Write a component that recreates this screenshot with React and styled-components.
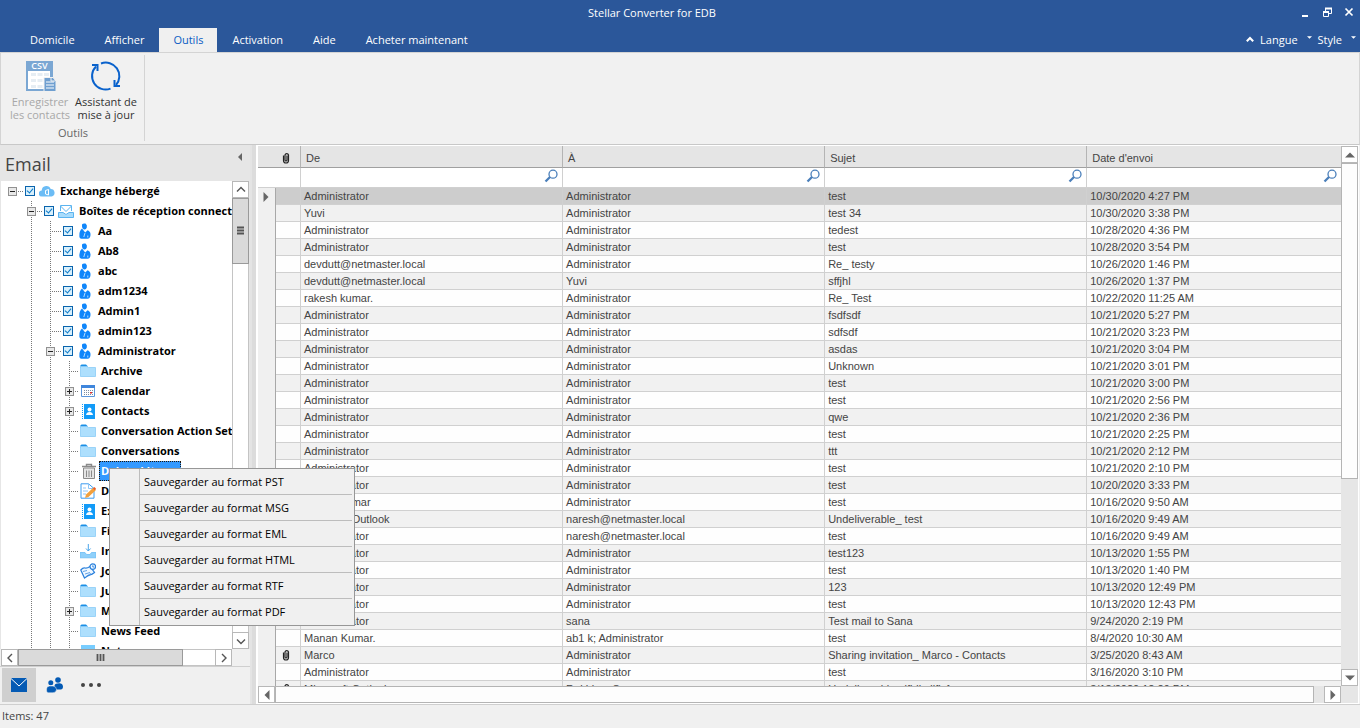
import React from "react";
import styled, { createGlobalStyle, css } from "styled-components";

const ui = '"Open Sans", "Noto Sans", sans-serif';
const gridFont = '"Liberation Sans", Arial, sans-serif';

const GlobalStyle = createGlobalStyle`
  *, *::before, *::after { box-sizing: border-box; }
  body { margin: 0; font-family: ${ui}; font-size: 11px; color: #444; background: #f0f0f0; }
  button { font: inherit; color: inherit; background: none; border: 0; padding: 0; margin: 0; }
  ul { list-style: none; margin: 0; padding: 0; }
  svg { display: block; flex: none; }
`;

const Window = styled.div`
  position: relative;
  display: flex;
  flex-direction: column;
  height: 100vh;
  overflow: hidden;
`;

/* ---------- Title bar and tabs ---------- */

const Header = styled.header`
  background: #2b579a;
  color: #fff;
  flex: none;
`;

const TitleBar = styled.div`
  display: grid;
  grid-template-columns: 1fr auto 1fr;
  align-items: center;
  height: 28px;
`;

const Title = styled.h1`
  grid-column: 2;
  margin: 0;
  padding: 0 56px 2px 0;
  font-size: 11px;
  font-weight: 400;
  line-height: 24px;
`;

const WindowButtons = styled.div`
  display: flex;
  justify-content: flex-end;
  gap: 12px;
  padding: 0 6px 4px 0;
`;

const TabBar = styled.nav`
  display: flex;
  align-items: stretch;
  height: 24px;
  padding-left: 15px;
`;

const Tab = styled.button`
  padding: 0 15px;
  line-height: 24px;
  ${(p) =>
    p.$active &&
    css`
      padding: 0 14px;
      background: #f0f0f0;
      color: #0a5cc4;
    `}
`;

const TabOptions = styled.div`
  display: flex;
  align-items: center;
  gap: 6px;
  margin-left: auto;
  padding-right: 4px;
`;

const OptionButton = styled.button`
  display: flex;
  align-items: center;
  gap: 9px;
  line-height: 24px;
  svg { margin-bottom: 6px; }
`;

/* ---------- Ribbon ---------- */

const Ribbon = styled.section`
  flex: none;
  display: flex;
  height: 93px;
  border: 1px solid #d4d4d4;
  border-bottom-color: #c8c8c8;
  background: #f1f1f1;
`;

const RibbonGroup = styled.div`
  display: flex;
  flex-direction: column;
  align-items: center;
  margin: 2px 0 3px;
  padding: 5px 5px 0 6px;
  border-right: 1px solid #d4d4d4;
`;

const RibbonTools = styled.div`
  display: flex;
  align-items: flex-start;
`;

const ToolButton = styled.button`
  display: flex;
  flex-direction: column;
  align-items: center;
  width: 66px;
  line-height: 13px;
  color: ${(p) => (p.disabled ? "#a8a8a8" : "#333")};
  span { white-space: nowrap; }
  svg { margin-bottom: 3px; }
`;

const GroupLabel = styled.div`
  margin-top: 5px;
  line-height: 14px;
  color: #666;
`;

/* ---------- Workspace ---------- */

const Workspace = styled.main`
  flex: 1;
  min-height: 0;
  display: flex;
`;

const Sidebar = styled.aside`
  flex: none;
  width: 250px;
  display: flex;
  flex-direction: column;
  min-height: 0;
`;

const Splitter = styled.div`
  flex: none;
  width: 6px;
  background: #dcdcdc;
  border-left: 2px solid #e4e4e4;
`;

const SidebarHeader = styled.div`
  flex: none;
  display: flex;
  align-items: flex-start;
  justify-content: space-between;
  height: 36px;
  padding: 8px 6px 0 5px;
  background: #e6e6e6;
`;

const SidebarTitle = styled.h2`
  margin: 0;
  font-size: 18px;
  font-weight: 400;
  line-height: 22px;
  color: #444;
`;

const TreeArea = styled.div`
  flex: 1;
  min-height: 0;
  display: flex;
  border: solid #e6e6e6;
  border-width: 0 1px;
  background: #fff;
`;

const Tree = styled.ul`
  flex: 1;
  min-width: 0;
  overflow: hidden;
  padding-left: 2px;
`;

const TreeRow = styled.li`
  display: flex;
  align-items: center;
  height: 20px;
  white-space: nowrap;
`;

const Guide = styled.span`
  flex: none;
  width: 19px;
  height: 20px;
  position: relative;
  display: flex;
  align-items: center;
  justify-content: center;
  &::before {
    content: "";
    position: absolute;
    left: 9px;
    top: 0;
    bottom: 0;
    width: 1px;
    background: repeating-linear-gradient(to bottom, #777 0 1px, transparent 1px 2px);
    display: ${(p) => (p.$vertical ? "block" : "none")};
  }
  &::after {
    content: "";
    position: absolute;
    left: 11px;
    right: ${(p) => (p.$stub ? "0" : "-2px")};
    top: 10px;
    height: 1px;
    background: repeating-linear-gradient(to right, #777 0 1px, transparent 1px 2px);
    display: ${(p) => (p.$branch ? "block" : "none")};
  }
`;

const Expander = styled.button`
  position: relative;
  z-index: 1;
  width: 9px;
  height: 9px;
  border: 1px solid #919191;
  background: #e8e8e8;
  &::before {
    content: "";
    position: absolute;
    left: 1px;
    top: 3px;
    width: 5px;
    height: 1px;
    background: #222;
  }
  &::after {
    content: "";
    position: absolute;
    left: 3px;
    top: 1px;
    width: 1px;
    height: 5px;
    background: #222;
    display: ${(p) => (p.$open ? "none" : "block")};
  }
`;

const TreeLabel = styled.label`
  display: flex;
  align-items: center;
  gap: 5px;
  height: 20px;
  padding-left: ${(p) => (p.$checkable ? "3px" : "1px")};
  font-weight: 700;
  color: #000;
`;

const Check = styled.input`
  appearance: none;
  flex: none;
  width: 10px;
  height: 10px;
  margin: 0 -1px 0 0;
  border: 1px solid #0a64ad;
  background: #d9f0fc;
  position: relative;
  &:checked::after {
    content: "";
    position: absolute;
    left: 2px;
    top: 0;
    width: 4px;
    height: 6px;
    border: solid #0a78c8;
    border-width: 0 1px 1px 0;
    transform: rotate(40deg);
  }
`;

const NodeText = styled.span`
  line-height: 18px;
  ${(p) =>
    p.$selected &&
    css`
      margin: 0 -2px;
      padding: 0 2px 0 1px;
      color: #fff;
      background: #3399ff;
      border: 1px dotted #20160a;
    `}
`;

/* ---------- Scroll bars ---------- */

const VScroll = styled.div`
  flex: none;
  width: 17px;
  display: flex;
  flex-direction: column;
  background: ${(p) => p.$track || "#fff"};
`;

const HScroll = styled.div`
  flex: none;
  height: 17px;
  display: flex;
  margin: 0 ${(p) => (p.$inset ? "18px" : "17px")} 0 ${(p) => (p.$inset ? "1px" : "0")};
  background: ${(p) => p.$track || "#fff"};
`;

const ScrollButton = styled.button`
  flex: none;
  width: 17px;
  height: 17px;
  display: grid;
  place-items: center;
  background: #fff;
  border: 1px solid #b8b8b8;
`;

const Thumb = styled.div`
  flex: ${(p) => p.$size} 1 0;
  display: grid;
  place-items: center;
  background: ${(p) => p.$fill || "#dadada"};
  border: 1px solid ${(p) => (p.$fill ? "#b4b4b4" : "#9a9a9a")};
`;

const Track = styled.div`
  flex: ${(p) => p.$size} 1 0;
  border: ${(p) => (p.$lined ? "solid #c4c4c4" : "0 solid")};
  border-width: ${(p) => (p.$lined === "x" ? "1px 0" : p.$lined ? "0 1px" : "0")};
`;

/* ---------- Sidebar footer ---------- */

const ModeBar = styled.nav`
  flex: none;
  display: flex;
  gap: 2px;
  height: 38px;
  padding: 1px 2px 2px;
  border-top: 1px solid #cfcfcf;
`;

const ModeButton = styled.button`
  width: 34px;
  height: 34px;
  display: grid;
  place-items: center;
  background: ${(p) => (p.$active ? "#cfcfcf" : "transparent")};
`;

/* ---------- Message grid ---------- */

const GridPane = styled.section`
  flex: 1;
  min-width: 0;
  display: flex;
  flex-direction: column;
  margin-right: 1px;
  border: 1px solid #fff;
  border-left-width: 2px;
  background: #e6e6e6;
  font-family: ${gridFont};
`;

const GridBody = styled.div`
  flex: 1;
  min-height: 0;
  display: flex;
`;

const GridClip = styled.div`
  flex: 1;
  min-width: 0;
  overflow: hidden;
  background: #f0f0f0;
`;

const Table = styled.table`
  width: 100%;
  table-layout: fixed;
  border-collapse: separate;
  border-spacing: 0;
`;

const Col = styled.col`
  width: ${(p) => p.$w};
`;

const HeadCell = styled.th`
  height: 22px;
  padding: 3px 5px 0;
  border-bottom: 1px solid #a0a0a0;
  border-right: ${(p) => (p.$divider ? "1px solid #b4b4b4" : "0")};
  background: #e5e5e5;
  text-align: left;
  font-weight: 400;
  line-height: 18px;
`;

const FilterCell = styled.td`
  height: 20px;
  padding: 0;
  background: #fff;
  border-bottom: 1px solid #d0d0d0;
  border-right: ${(p) => (p.$divider ? "1px solid #d0d0d0" : "0")};
`;

const FilterBox = styled.div`
  display: flex;
  align-items: center;
  padding: 0 4px 3px 0;
`;

const FilterInput = styled.input`
  flex: 1;
  min-width: 0;
  height: 16px;
  padding: 0 3px;
  border: 0;
  outline: 0;
  background: transparent;
  font: inherit;
`;

const Row = styled.tr`
  background: ${(p) => (p.$selected ? "#cdcdcd" : p.$odd ? "#f1f1f1" : "#fefefe")};
`;

const Cell = styled.td`
  height: 17px;
  padding: 0 3px;
  border-bottom: 1px solid #d0d0d0;
  border-right: ${(p) => (p.$last ? "0" : "1px solid #d0d0d0")};
  line-height: 16px;
  white-space: nowrap;
  overflow: hidden;
`;

const ClipCell = styled(Cell)`
  padding-left: 5px;
`;

const IndicatorCell = styled.td`
  height: 17px;
  padding: 0 0 0 3px;
  background: #f0f0f0;
  border-right: 1px solid #a8a8a8;
`;

/* ---------- Context menu ---------- */

const Menu = styled.ul`
  position: absolute;
  left: 109px;
  top: 468px;
  width: 246px;
  border: 1px solid #979797;
  background: #f0f0f0;
  color: #000;
`;

const MenuItem = styled.li`
  display: flex;
  height: 26px;
  padding-right: 2px;
  &::before {
    content: "";
    width: 29px;
    border-right: 1px solid #bdbdbd;
    margin-left: 1px;
  }
  button {
    flex: 1;
    text-align: left;
    padding-left: 4px;
    border-bottom: 1px solid ${(p) => (p.$last ? "transparent" : "#bdbdbd")};
  }
`;

const StatusBar = styled.footer`
  flex: none;
  height: 24px;
  padding-left: 2px;
  border-top: 1px solid #cfcfcf;
  line-height: 22px;
`;

/* ---------- Icons ---------- */

const CsvIcon = () => (
  <svg width="32" height="32" viewBox="0 0 32 32">
    <path d="M2 1H29V31H2Z" fill="#7ba7d3" />
    <path d="M4 11H26V29H4Z" fill="#fff" />
    <path d="M7 13h5v3H7zM13.500 13h5v3h-5zM20 13h5v3h-5zM7 19h5v3H7zM13.500 19h5v3h-5zM7 25h5v3H7zM13.500 25h5v3h-5z" fill="#e6edf3" />
    <path d="M20 17.500H29L32 21V31.500H20Z" fill="#6f9fd0" stroke="#f1f1f1" strokeWidth="1" />
    <path d="M22 22h8M22 25h8M22 28h8" stroke="#fff" strokeWidth="1" />
    <path d="M27 17v4h4" fill="none" stroke="#f1f1f1" strokeWidth="1" />
    <text x="15.500" y="9" textAnchor="middle" fontSize="9" fontFamily="Open Sans, sans-serif" fontWeight="600" fill="#fff">CSV</text>
  </svg>
);

const RefreshIcon = () => (
  <svg width="32" height="32" viewBox="0 0 32 32" fill="none" stroke="#0a62cc" strokeWidth="2">
    <path d="M11 3.500A13.500 13.500 0 0 1 26 25" />
    <path d="M20.500 28.600A13.500 13.500 0 0 1 6 6.500" />
    <path d="M2 5H7.500v6" />
    <path d="M30 26h-5.500v-6" />
  </svg>
);

const TriangleIcon = ({ dir, size = 10, color = "#666" }) => {
  const shapes = {
    up: "M0 6L4 2L8 6Z",
    down: "M0 2L8 2L4 6Z",
    left: "M6 0V8L2 4Z",
    right: "M2 0V8L6 4Z",
  };
  return (
    <svg width={size} height={size} viewBox="0 0 8 8">
      <path d={shapes[dir]} fill={color} />
    </svg>
  );
};

const ChevronIcon = ({ dir, size = 10, color = "#555", width = 1.4 }) => {
  const shapes = {
    up: "M1 6.500L5 2.500L9 6.500",
    down: "M1 3.500L5 7.500L9 3.500",
    left: "M7 1L3 5L7 9",
    right: "M3 1L7 5L3 9",
  };
  return (
    <svg width={size} height={size} viewBox="0 0 10 10" fill="none" stroke={color} strokeWidth={width}>
      <path d={shapes[dir]} />
    </svg>
  );
};

const GripIcon = ({ vertical }) => (
  <svg width="9" height="9" viewBox="0 0 9 9" stroke="#555" strokeWidth="2">
    <path d={vertical ? "M1 1.500H8M1 4.500H8M1 7.500H8" : "M1.500 1V8M4.500 1V8M7.500 1V8"} strokeWidth="1.800" />
  </svg>
);

const MinimizeIcon = () => (
  <svg width="10" height="10" viewBox="0 0 10 10"><path d="M2 8h6v2H2z" fill="#fff" /></svg>
);

const RestoreIcon = () => (
  <svg width="10" height="10" viewBox="0 0 10 10" fill="none" stroke="#fff">
    <path d="M3.500 4V1.500H9.500V6.500H7" />
    <path d="M3 1.500h7M1 5h6" strokeWidth="2" />
    <path d="M1.500 4.500h5v5h-5z" />
  </svg>
);

const CloseIcon = () => (
  <svg width="10" height="10" viewBox="0 0 10 10" stroke="#fff" strokeWidth="1.700">
    <path d="M1.500 1.500L8.500 8.500M8.500 1.500L1.500 8.500" />
  </svg>
);

const CloudIcon = () => (
  <svg width="16" height="16" viewBox="0 0 16 16">
    <path d="M3 13.500a3 3 0 0 1-.3-6A4.800 4.800 0 0 1 7 3 4.600 4.600 0 0 1 11.700 6 3.800 3.800 0 0 1 12.600 13.500Z" fill="#6bbcf5" />
    <path d="M6.500 7.500l3-1v5.500L6.500 11z" fill="none" stroke="#fff" strokeWidth="1" />
  </svg>
);

const MailboxIcon = () => (
  <svg width="16" height="16" viewBox="0 0 16 16">
    <path d="M.5 9.500V14.500H15.500V9.500H11L8 12 5 9.500Z" fill="#a8dcfc" />
    <path d="M2.500 8V2.500H13.500V8M2.500 3L8 8.500L13.500 3M.5 9.500V14.500H15.500V9.500H11L8 11.500 5 9.500Z" fill="none" stroke="#5bb4f0" />
  </svg>
);

const PersonIcon = () => (
  <svg width="16" height="16" viewBox="0 0 16 16" fill="#0f86fb">
    <path d="M5 1.500Q6 0 8.500.500Q10.500 2 9.800 4.500Q9 7 7 6.500Q4.600 5.500 5 1.500Z" />
    <path d="M5 5.500L8.200 9.600 10.600 7.300Q13.600 8.500 13.500 11.500Q13.600 15 11 15.800H4.500Q2 15.500 2.400 12Q2.200 8 5 5.500Z" />
    <path d="M8 10L6.800 14M10.800 12.500v2" stroke="#e4f2ff" strokeWidth=".8" fill="none" />
  </svg>
);

const FolderIcon = () => (
  <svg width="16" height="16" viewBox="0 0 16 16">
    <path d="M.5 4V2.500L1.500 1.500H6L7.500 3V5H.5Z" fill="#1b8fe6" />
    <path d="M.5 3.500H7L8.500 4.500H15.500V13.500H.5Z" fill="#addffd" stroke="#8accf6" strokeWidth=".8" />
  </svg>
);

const CalendarIcon = () => (
  <svg width="16" height="16" viewBox="0 0 16 16">
    <path d="M1.500 2.500H14.500V13.500H1.500Z" fill="#fff" stroke="#5a96dc" />
    <path d="M1 2h14v3H1z" fill="#3f86dc" />
    <path d="M4 7.500h9M4 9.500h9M4 11.500h9" stroke="#7d8ea3" strokeDasharray="1 1" />
    <path d="M10 9h2v1.500h-2z" fill="#e03030" />
  </svg>
);

const ContactsIcon = () => (
  <svg width="16" height="16" viewBox="0 0 16 16">
    <path d="M4 1H15V16H4Z" fill="#129bf8" />
    <path d="M2.500 1V16" stroke="#129bf8" strokeDasharray="1 1" />
    <circle cx="9.500" cy="6.500" r="2" fill="#fff" />
    <path d="M6 12Q6.500 9 9.500 9T13 12Z" fill="#fff" />
  </svg>
);

const TrashIcon = () => (
  <svg width="16" height="16" viewBox="0 0 16 16" fill="none" stroke="#8a8a8a">
    <path d="M2 3.500H16M6.500 3V1.500H11.500V3" strokeWidth="1.400" />
    <path d="M3.500 5V15.500H14.500V5Z" fill="#e4e4e4" />
    <path d="M6.500 7.500V14M9 7.500V14M11.500 7.500V14" />
  </svg>
);

const DraftIcon = () => (
  <svg width="16" height="16" viewBox="0 0 16 16">
    <path d="M1 .8H8.500L14 5.500V15.200H1Z" fill="#fff" stroke="#3c9cf0" />
    <path d="M8.500 1V5.500H14M3 5h3M3 8h5M3 11h3" fill="none" stroke="#8cc4f6" />
    <path d="M13.500 4.500L16 7 8.500 14 5 15 6 11.500Z" fill="#f2a03c" />
    <path d="M14.500 4l1.500 1.800-1.200 1.400-1.800-1.800z" fill="#ef5a28" />
  </svg>
);

const InboxIcon = () => (
  <svg width="16" height="16" viewBox="0 0 16 16">
    <path d="M0 9.500H5L6.500 11.500H10L11.500 9.500H16V14.800H0Z" fill="#8fd0fa" stroke="#6bbcf5" strokeWidth=".8" />
    <path d="M8.300 1V8M6 5.500L8.300 8 10.600 5.500" fill="none" stroke="#4aa5ea" />
  </svg>
);

const JournalIcon = () => (
  <svg width="16" height="16" viewBox="0 0 16 16" fill="#eef7ff" stroke="#2a80dc" strokeWidth="1.200">
    <path d="M.8 7Q3 4.500 5 5T10 3.500L14.500 9.500Q12 11.500 10 12T4.500 15Z" />
    <path d="M3 8.500l4-1M5 11l5-1.500M6.500 13L11 10.500" strokeWidth=".7" />
    <circle cx="12.800" cy="3.600" r="2.800" />
    <path d="M12.800 2.300V4h1.500" strokeWidth=".9" />
  </svg>
);

const NotesIcon = () => (
  <svg width="16" height="16" viewBox="0 0 16 16"><path d="M1 2H15V15H1Z" fill="#78cdff" /></svg>
);

const PaperclipIcon = () => (
  <svg width="10" height="12" viewBox="0 0 10 12" fill="none" stroke="#222" strokeWidth="1.200">
    <path d="M2.500 3.500V8.500a2.400 2.400 0 0 0 5 0V3a1.800 1.800 0 0 0-3.500 0V8a1 1 0 0 0 2 0V3.500" />
  </svg>
);

const SearchIcon = () => (
  <svg width="14" height="14" viewBox="0 0 14 14" fill="none" stroke="#4a7fba">
    <circle cx="9" cy="5.200" r="4" strokeWidth="1.300" />
    <path d="M6 8L1.500 12.500" strokeWidth="2.300" />
  </svg>
);

const EnvelopeIcon = () => (
  <svg width="16" height="14" viewBox="0 0 16 14">
    <path d="M0 0H16V14H0Z" fill="#045ab4" />
    <path d="M0 .5L8 8 16 .5" fill="none" stroke="#fff" strokeWidth="1" />
  </svg>
);

const PeopleIcon = () => (
  <svg width="18" height="16" viewBox="0 0 18 16" fill="#045ab4">
    <circle cx="12" cy="3" r="2.800" />
    <circle cx="4.800" cy="5.800" r="2.500" />
    <path d="M8.500 10.500Q8 6.500 11.500 6.500Q16.500 5.500 17 9.500Q17 13 14 12.500H10.500Z" />
    <path d="M.6 14Q0 9.500 3.500 9H7Q10.500 9.500 10.500 12.500Q10.500 15.500 7 15.800H2Q.8 15.500.6 14Z" stroke="#f0f0f0" strokeWidth=".5" />
  </svg>
);

const MoreIcon = () => (
  <svg width="22" height="6" viewBox="0 0 22 6" fill="#444">
    <circle cx="3" cy="3" r="2" /><circle cx="11" cy="3" r="2" /><circle cx="19" cy="3" r="2" />
  </svg>
);

/* ---------- Data ---------- */

const tabs = ["Domicile", "Afficher", "Outils", "Activation", "Aide", "Acheter maintenant"];

const nodes = [
  { level: 0, text: "Exchange hébergé", Icon: CloudIcon, open: true },
  { level: 1, text: "Boîtes de réception connectées", Icon: MailboxIcon, open: true },
  { level: 2, text: "Aa", Icon: PersonIcon },
  { level: 2, text: "Ab8", Icon: PersonIcon },
  { level: 2, text: "abc", Icon: PersonIcon },
  { level: 2, text: "adm1234", Icon: PersonIcon },
  { level: 2, text: "Admin1", Icon: PersonIcon },
  { level: 2, text: "admin123", Icon: PersonIcon },
  { level: 2, text: "Administrator", Icon: PersonIcon, open: true },
  { level: 3, text: "Archive", Icon: FolderIcon },
  { level: 3, text: "Calendar", Icon: CalendarIcon, open: false },
  { level: 3, text: "Contacts", Icon: ContactsIcon, open: false },
  { level: 3, text: "Conversation Action Settings", Icon: FolderIcon },
  { level: 3, text: "Conversations", Icon: FolderIcon },
  { level: 3, text: "Deleted Items", Icon: TrashIcon, selected: true },
  { level: 3, text: "Drafts", Icon: DraftIcon },
  { level: 3, text: "ExternalContacts", Icon: ContactsIcon },
  { level: 3, text: "Files", Icon: FolderIcon },
  { level: 3, text: "Inbox", Icon: InboxIcon },
  { level: 3, text: "Journal", Icon: JournalIcon },
  { level: 3, text: "Junk Email", Icon: FolderIcon },
  { level: 3, text: "Migration", Icon: FolderIcon, open: false },
  { level: 3, text: "News Feed", Icon: FolderIcon },
  { level: 3, text: "Notes", Icon: NotesIcon },
];

const A = "Administrator";
const messages = [
  [A, A, "test", "10/30/2020 4:27 PM"],
  ["Yuvi", A, "test 34", "10/30/2020 3:38 PM"],
  [A, A, "tedest", "10/28/2020 4:36 PM"],
  [A, A, "test", "10/28/2020 3:54 PM"],
  ["devdutt@netmaster.local", A, "Re_ testy", "10/26/2020 1:46 PM"],
  ["devdutt@netmaster.local", "Yuvi", "sffjhl", "10/26/2020 1:37 PM"],
  ["rakesh kumar.", A, "Re_ Test", "10/22/2020 11:25 AM"],
  [A, A, "fsdfsdf", "10/21/2020 5:27 PM"],
  [A, A, "sdfsdf", "10/21/2020 3:23 PM"],
  [A, A, "asdas", "10/21/2020 3:04 PM"],
  [A, A, "Unknown", "10/21/2020 3:01 PM"],
  [A, A, "test", "10/21/2020 3:00 PM"],
  [A, A, "test", "10/21/2020 2:56 PM"],
  [A, A, "qwe", "10/21/2020 2:36 PM"],
  [A, A, "test", "10/21/2020 2:25 PM"],
  [A, A, "ttt", "10/21/2020 2:12 PM"],
  [A, A, "test", "10/21/2020 2:10 PM"],
  [A, A, "test", "10/20/2020 3:33 PM"],
  ["rakesh kumar", A, "test", "10/16/2020 9:50 AM"],
  ["Microsoft Outlook", "naresh@netmaster.local", "Undeliverable_ test", "10/16/2020 9:49 AM"],
  [A, "naresh@netmaster.local", "test", "10/16/2020 9:49 AM"],
  [A, A, "test123", "10/13/2020 1:55 PM"],
  [A, A, "test", "10/13/2020 1:40 PM"],
  [A, A, "123", "10/13/2020 12:49 PM"],
  [A, A, "test", "10/13/2020 12:43 PM"],
  [A, "sana", "Test mail to Sana", "9/24/2020 2:19 PM"],
  ["Manan Kumar.", "ab1 k; Administrator", "test", "8/4/2020 10:30 AM"],
  ["Marco", A, "Sharing invitation_ Marco - Contacts", "3/25/2020 8:43 AM", true],
  [A, A, "test", "3/16/2020 3:10 PM"],
  ["Microsoft Outlook", "Rakhi m; Sana", "Undeliverable_ ifjdjsdlflsf", "3/13/2020 12:29 PM", true],
];

const columns = ["De", "À", "Sujet", "Date d'envoi"];
const formats = ["PST", "MSG", "EML", "HTML", "RTF", "PDF"];

/* ---------- Parts ---------- */

function TreeNode({ level, text, Icon, open, selected }) {
  const checkable = level < 3;
  return (
    <TreeRow>
      {Array.from({ length: level }, (_, i) => (
        <Guide key={i} $vertical={i > 0} />
      ))}
      <Guide $vertical={level > 0} $branch $stub={!checkable}>
        {open !== undefined && <Expander $open={open} aria-label={open ? "Réduire" : "Développer"} />}
      </Guide>
      <TreeLabel as={checkable ? "label" : "div"} $checkable={checkable}>
        {checkable && <Check type="checkbox" defaultChecked />}
        <Icon />
        <NodeText $selected={selected}>{text}</NodeText>
      </TreeLabel>
    </TreeRow>
  );
}

function MessageTable() {
  return (
    <Table>
      <colgroup>
        <Col $w="18px" />
        <Col $w="25px" />
        <Col $w="24.200%" />
        <Col $w="24.200%" />
        <Col $w="24.200%" />
        <Col $w="auto" />
      </colgroup>
      <thead>
        <tr>
          <HeadCell aria-label="État" />
          <HeadCell $divider aria-label="Pièce jointe"><PaperclipIcon /></HeadCell>
          {columns.map((name, i) => (
            <HeadCell key={name} $divider={i < 3}>{name}</HeadCell>
          ))}
        </tr>
        <tr>
          <FilterCell />
          <FilterCell $divider />
          {columns.map((name, i) => (
            <FilterCell key={name} $divider={i < 3}>
              <FilterBox>
                <FilterInput aria-label={`Filtrer ${name}`} />
                <SearchIcon />
              </FilterBox>
            </FilterCell>
          ))}
        </tr>
      </thead>
      <tbody>
        {messages.map(([from, to, subject, date, clip], i) => (
          <Row key={i} $odd={i % 2 === 1} $selected={i === 0}>
            <IndicatorCell>{i === 0 && <TriangleIcon dir="right" />}</IndicatorCell>
            <ClipCell>{clip && <PaperclipIcon />}</ClipCell>
            <Cell>{from}</Cell>
            <Cell>{to}</Cell>
            <Cell>{subject}</Cell>
            <Cell $last>{date}</Cell>
          </Row>
        ))}
      </tbody>
    </Table>
  );
}

export default function App() {
  return (
    <Window>
      <GlobalStyle />
      <Header>
        <TitleBar>
          <Title>Stellar Converter for EDB</Title>
          <WindowButtons>
            <button aria-label="Réduire la fenêtre"><MinimizeIcon /></button>
            <button aria-label="Restaurer"><RestoreIcon /></button>
            <button aria-label="Fermer"><CloseIcon /></button>
          </WindowButtons>
        </TitleBar>
        <TabBar>
          {tabs.map((t) => (
            <Tab key={t} $active={t === "Outils"}>{t}</Tab>
          ))}
          <TabOptions>
            <button aria-label="Masquer le ruban"><ChevronIcon dir="up" size={8} color="#fff" width={2.6} /></button>
            <OptionButton>Langue<TriangleIcon dir="down" size={5} color="#fff" /></OptionButton>
            <OptionButton>Style<TriangleIcon dir="down" size={5} color="#fff" /></OptionButton>
          </TabOptions>
        </TabBar>
      </Header>

      <Ribbon>
        <RibbonGroup>
          <RibbonTools>
            <ToolButton disabled>
              <CsvIcon />
              <span>Enregistrer</span>
              <span>les contacts</span>
            </ToolButton>
            <ToolButton>
              <RefreshIcon />
              <span>Assistant de</span>
              <span>mise à jour</span>
            </ToolButton>
          </RibbonTools>
          <GroupLabel>Outils</GroupLabel>
        </RibbonGroup>
      </Ribbon>

      <Workspace>
        <Sidebar>
          <SidebarHeader>
            <SidebarTitle>Email</SidebarTitle>
            <button aria-label="Replier le volet"><TriangleIcon dir="left" size={8} /></button>
          </SidebarHeader>
          <TreeArea>
            <Tree>
              {nodes.map((n) => (
                <TreeNode key={n.text} {...n} />
              ))}
            </Tree>
            <VScroll>
              <ScrollButton aria-label="Monter"><ChevronIcon dir="up" /></ScrollButton>
              <Thumb $size={64}><GripIcon vertical /></Thumb>
              <Track $size={371} $lined="y" />
              <ScrollButton aria-label="Descendre"><ChevronIcon dir="down" /></ScrollButton>
            </VScroll>
          </TreeArea>
          <HScroll $inset>
            <ScrollButton aria-label="Défiler à gauche"><ChevronIcon dir="left" /></ScrollButton>
            <Thumb $size={166}><GripIcon /></Thumb>
            <Track $size={32} $lined="x" />
            <ScrollButton aria-label="Défiler à droite"><ChevronIcon dir="right" /></ScrollButton>
          </HScroll>
          <ModeBar>
            <ModeButton $active aria-label="Courrier"><EnvelopeIcon /></ModeButton>
            <ModeButton aria-label="Contacts"><PeopleIcon /></ModeButton>
            <ModeButton aria-label="Plus"><MoreIcon /></ModeButton>
          </ModeBar>
        </Sidebar>
        <Splitter />
        <GridPane>
          <GridBody>
            <GridClip><MessageTable /></GridClip>
            <VScroll $track="#e6e6e6">
              <ScrollButton aria-label="Monter la liste"><TriangleIcon dir="up" /></ScrollButton>
              <Thumb $size={315} $fill="#fdfdfd" />
              <Track $size={190} />
              <ScrollButton aria-label="Descendre la liste"><TriangleIcon dir="down" /></ScrollButton>
            </VScroll>
          </GridBody>
          <HScroll $track="#e6e6e6">
            <ScrollButton aria-label="Liste à gauche"><TriangleIcon dir="left" /></ScrollButton>
            <Thumb $size={1039} $fill="#fdfdfd" />
            <Track $size={10} />
            <ScrollButton aria-label="Liste à droite"><TriangleIcon dir="right" /></ScrollButton>
          </HScroll>
        </GridPane>
      </Workspace>

      <StatusBar>Items: 47</StatusBar>

      <Menu>
        {formats.map((f, i) => (
          <MenuItem key={f} $last={i === formats.length - 1}>
            <button>Sauvegarder au format {f}</button>
          </MenuItem>
        ))}
      </Menu>
    </Window>
  );
}
